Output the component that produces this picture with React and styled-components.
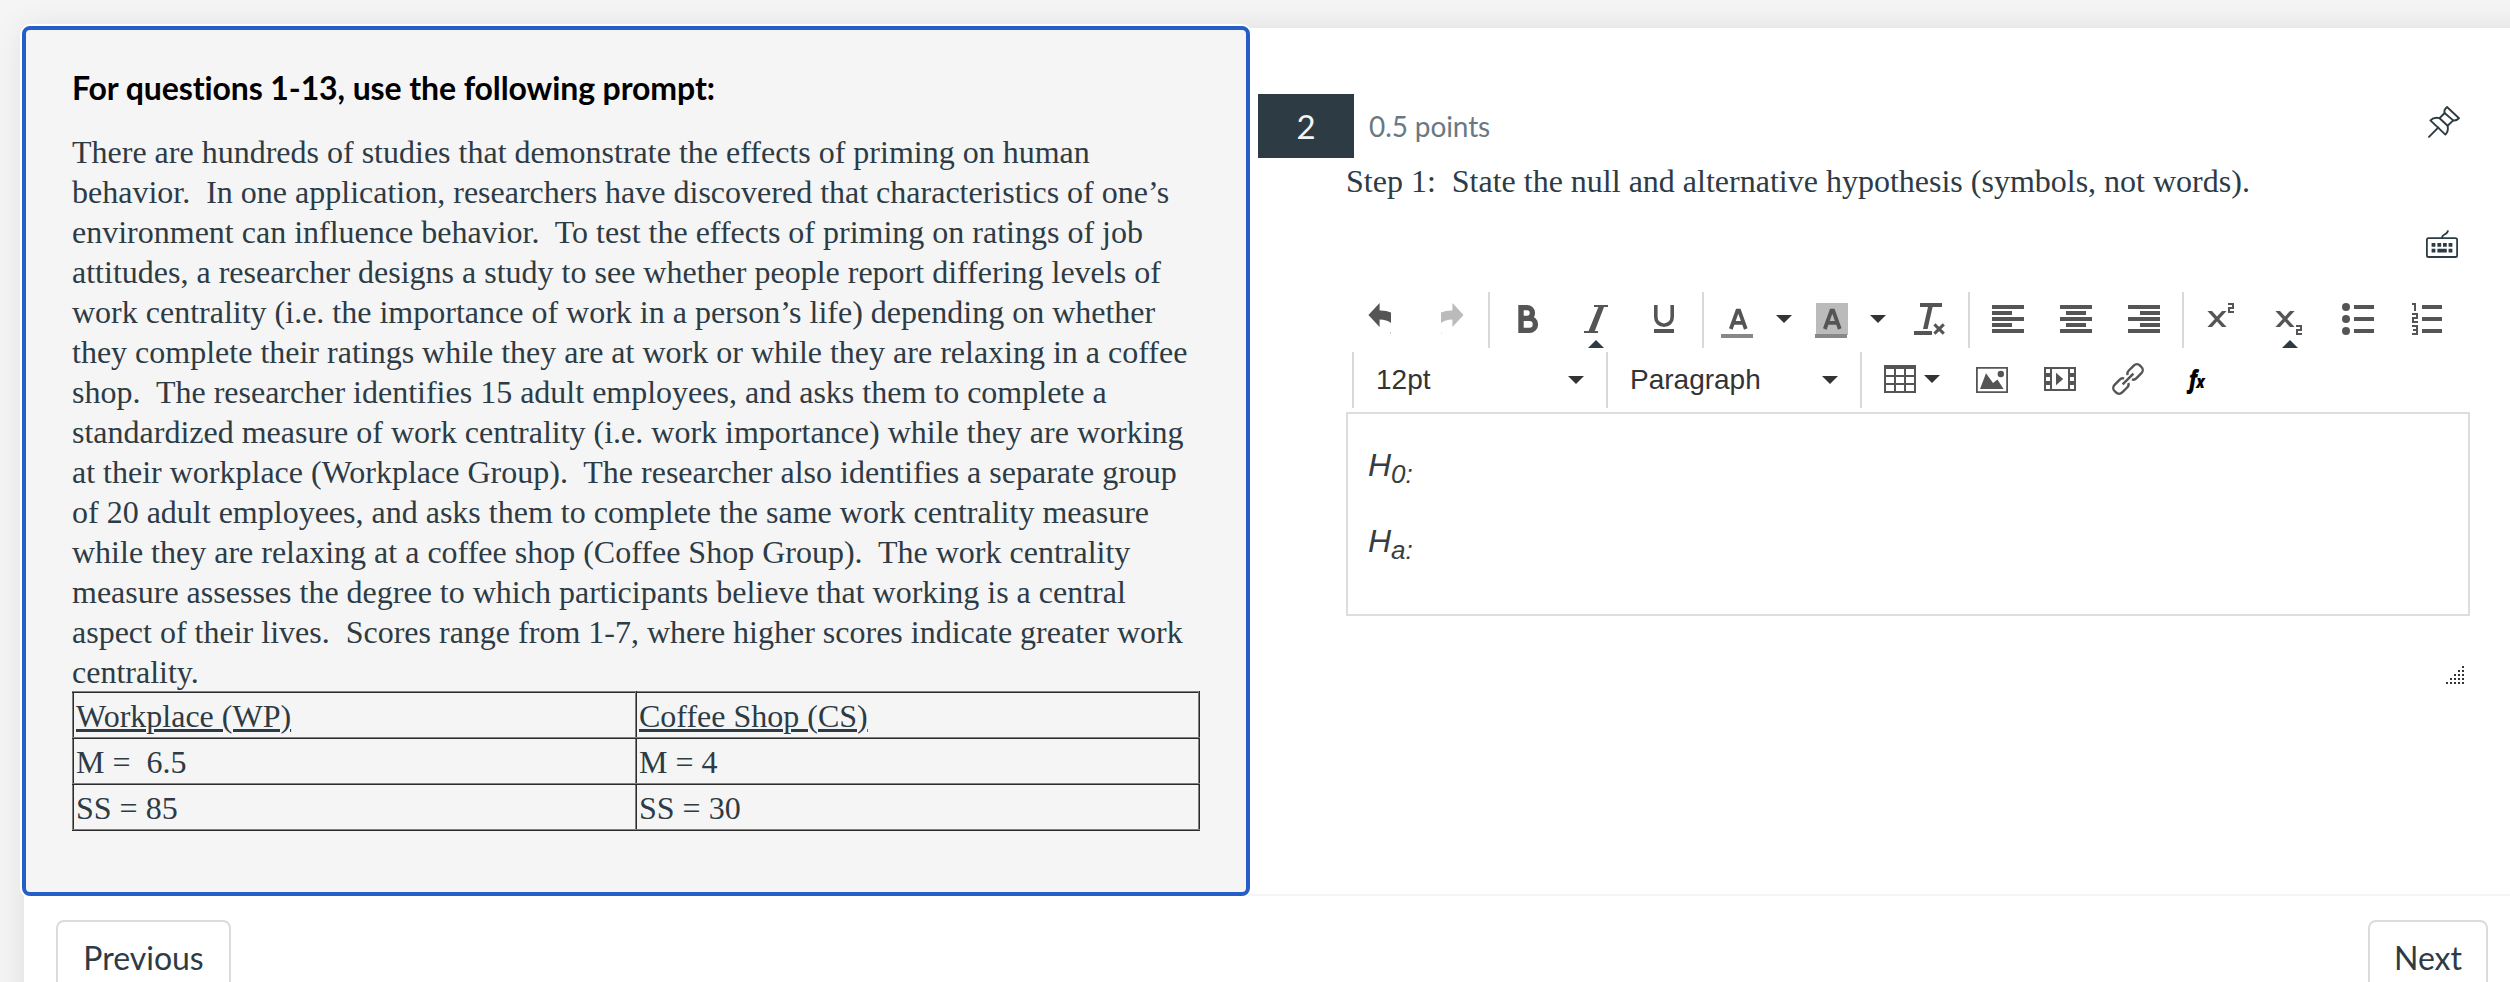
import styled, { createGlobalStyle } from "styled-components"

const GlobalStyle = createGlobalStyle`
  * {
    box-sizing: border-box;
  }
  body {
    margin: 0;
    background: #f5f5f5;
    overflow: hidden;
  }
`

const promptLines = [
  "There are hundreds of studies that demonstrate the effects of priming on human",
  "behavior.\u00a0 In one application, researchers have discovered that characteristics of one’s",
  "environment can influence behavior.\u00a0 To test the effects of priming on ratings of job",
  "attitudes, a researcher designs a study to see whether people report differing levels of",
  "work centrality (i.e. the importance of work in a person’s life) depending on whether",
  "they complete their ratings while they are at work or while they are relaxing in a coffee",
  "shop.\u00a0 The researcher identifies 15 adult employees, and asks them to complete a",
  "standardized measure of work centrality (i.e. work importance) while they are working",
  "at their workplace (Workplace Group).\u00a0 The researcher also identifies a separate group",
  "of 20 adult employees, and asks them to complete the same work centrality measure",
  "while they are relaxing at a coffee shop (Coffee Shop Group).\u00a0 The work centrality",
  "measure assesses the degree to which participants believe that working is a central",
  "aspect of their lives.\u00a0 Scores range from 1-7, where higher scores indicate greater work",
  "centrality.",
]

const Icon = ({ children, color = "#555" }) => (
  <IconSvg viewBox="0 0 16 16" color={color}>
    {children}
  </IconSvg>
)

const Caret = () => (
  <CaretSvg viewBox="0 0 16 8">
    <path d="M0 0h16L8 8z" />
  </CaretSvg>
)

const letterA = (
  <path d="M4.4 13 7.7 3.8h.9L11.9 13M5.4 9.9h5.4" fill="none" stroke="currentColor" strokeWidth="1.9" />
)

const UndoIcon = ({ color }) => (
  <Icon color={color}>
    <path d="M1.2 6 6.8 0v3.8q3.2-.1 5.7.9V10Q10.5 8.2 6.8 8.2V12z" />
    <path d="M12.2 14.5h.3v1h-.3z" opacity=".5" />
  </Icon>
)

const BoldIcon = () => (
  <Icon>
    <path
      d="M4.5 2.3h3a2.7 2.7 0 0 1 0 5.4h-3M4.5 7.7h4.2a3 3 0 0 1 0 6H4.5zM4.5 1v14"
      fill="none"
      stroke="currentColor"
      strokeWidth="2.7"
    />
  </Icon>
)

const ItalicIcon = () => (
  <Icon>
    <path d="M7 1h7v1h-2L7.4 14H9v1H2v-1h2.3L9.2 2H7z" />
  </Icon>
)

const UnderlineIcon = () => (
  <Icon>
    <path d="M3.9 1v6.1a4.1 4 0 0 0 8.2 0V1" fill="none" stroke="currentColor" strokeWidth="1.8" />
    <path d="M3 13h10v2H3z" />
  </Icon>
)

const TextColorIcon = () => (
  <Icon>
    {letterA}
    <path d="M-.5 15.5h16v2h-16z" fill="#888" />
  </Icon>
)

const BackColorIcon = () => (
  <Icon>
    <path d="M0 0h16v16H0z" fill="#bbb" />
    {letterA}
    <path d="M-.5 15.5h16v2h-16z" fill="#888" />
  </Icon>
)

const ClearIcon = () => (
  <Icon>
    <path d="M3 0h11v2H9.3L6.8 13H4.5L7 2H3zM0 14h9v2H0z" />
    <path d="m10.2 10.7 4.7 4.6m0-4.6-4.7 4.6" fill="none" stroke="currentColor" strokeWidth="1.5" />
  </Icon>
)

const AlignLeftIcon = () => (
  <Icon>
    <path d="M0 1h16v2H0zM0 4h10v2H0zM0 7h16v2H0zM0 10h10v2H0zM0 13h16v2H0z" />
  </Icon>
)

const AlignCenterIcon = () => (
  <Icon>
    <path d="M0 1h16v2H0zM3 4h10v2H3zM0 7h16v2H0zM3 10h10v2H3zM0 13h16v2H0z" />
  </Icon>
)

const AlignRightIcon = () => (
  <Icon>
    <path d="M0 1h16v2H0zM6 4h10v2H6zM0 7h16v2H0zM6 10h10v2H6zM0 13h16v2H0z" />
  </Icon>
)

const cross = <path d="M.7 4H3l2.500 2.700L8 4h2.300L6.600 8l3.700 4H8L5.500 9.300 3 12H.7l3.700-4z" />

const SuperIcon = () => (
  <Icon>
    {cross}
    <path d="M11 .5h2.5v2h-2v2H14" fill="none" stroke="currentColor" />
  </Icon>
)

const SubIcon = () => (
  <Icon>
    {cross}
    <path d="M11 11.5h2.5v2h-2v2H14" fill="none" stroke="currentColor" />
  </Icon>
)

const BulletsIcon = () => (
  <Icon>
    <circle cx="2" cy="2" r="2" />
    <circle cx="2" cy="8" r="2" />
    <circle cx="2" cy="14" r="2" />
    <path d="M6 1h10v2H6zM6 7h10v2H6zM6 13h10v2H6z" />
  </Icon>
)

const NumbersIcon = () => (
  <Icon>
    <path d="M6 1h10v2H6zM6 7h10v2H6zM6 13h10v2H6z" />
    <path d="M1 .5h1.5V4M1 5.5h2.5v2h-2v2H4M1 11.5h2.5v4H1M1.5 13.5h2" fill="none" stroke="currentColor" />
  </Icon>
)

const TableIcon = () => (
  <Icon>
    <path
      fillRule="evenodd"
      d="M0 1h16v14H0zM1 3v3h4V3zM6 3v3h4V3zM11 3v3h4V3zM1 7v3h4V7zM6 7v3h4V7zM11 7v3h4V7zM1 11v3h4v-3zM6 11v3h4v-3zM11 11v3h4v-3z"
    />
  </Icon>
)

const ImageIcon = () => (
  <Icon>
    <path fillRule="evenodd" d="M0 2h16v13H0zM.9 2.9v11.2h14.2V2.9z" />
    <circle cx="12.4" cy="5.5" r="1.6" />
    <path d="M2 13 5 5.1 8.5 10l2.2-1.7L13.8 13z" />
  </Icon>
)

const MediaIcon = () => (
  <Icon>
    <path
      fillRule="evenodd"
      d="M0 2h16v12H0zM4 3v10h8V3zM1 3v2h2V3zM1 7v2h2V7zM1 11v2h2v-2zM13 3v2h2V3zM13 7v2h2V7zM13 11v2h2v-2z"
    />
    <path d="M6 4.9v6.2L9.6 8z" />
  </Icon>
)

const LinkIcon = () => (
  <Icon>
    <g transform="rotate(-45 8 8)" fill="none" stroke="currentColor" strokeWidth="1.2">
      <path d="M9.3 6.5q.4-1.2 2-1.2h3.5a2.2 2.2 0 0 1 2.2 2.2v1a2.2 2.2 0 0 1-2.2 2.2h-3.5q-1.6 0-2-1.2" />
      <path d="M6.7 6.5q-.4-1.2-2-1.2H1.2A2.2 2.2 0 0 0-1 7.5v1a2.2 2.2 0 0 0 2.2 2.2h3.5q1.6 0 2-1.2" />
      <path d="M4.2 8h7.6" />
    </g>
  </Icon>
)

const PinIcon = () => (
  <Icon color="#2d3b45">
    <g fill="none" stroke="currentColor" strokeWidth=".95" strokeLinejoin="round" strokeLinecap="round">
      <path d="M.5 15.4 5.2 10.7" />
      <path d="M1.2 7.2 8.7 14.3C9.8 13.2 10.2 11.6 9.8 9.9L12.6 7.2C13.5 7.4 14.3 7.2 15.5 6.1L9.5.5C8.3 1.5 8 2.5 8.3 3.5L5.8 6.1C4 5.6 2.4 6 1.2 7.2z" />
      <path d="M5.8 6.1 9.8 9.9M8.3 3.5 12.6 7.2" />
    </g>
  </Icon>
)

const KeyboardIcon = () => (
  <Icon color="#2d3b45">
    <rect x=".45" y="5.1" width="15.1" height="9.4" rx=".8" fill="none" stroke="currentColor" strokeWidth=".9" />
    <path d="M8 5C8 2.8 10.9 3.5 11 1.2" fill="none" stroke="currentColor" strokeWidth=".9" />
    <path d="M2.8 7.5h1.9v1.9H2.8zM5.7 7.5h1.9v1.9H5.7zM8.5 7.5h1.9v1.9H8.5zM11.3 7.5h1.9v1.9h-1.9zM2.8 10.4h1.9v1.9H2.8zM5.7 10.4h4.7v1.9H5.7zM11.3 10.4h1.9v1.9h-1.9z" />
  </Icon>
)

const App = () => {
  return (
    <Page>
      <GlobalStyle />
      <Card>
        <Split>
          <Prompt>
            <h2>For questions 1-13, use the following prompt:</h2>
            <div className="lines">
              {promptLines.map((line) => (
                <Line key={line}>{line}</Line>
              ))}
            </div>
            <DataTable>
              <tbody>
                <tr>
                  <td><u>Workplace (WP)</u></td>
                  <td><u>Coffee Shop (CS)</u></td>
                </tr>
                <tr>
                  <td>M =&nbsp; 6.5</td>
                  <td>M = 4</td>
                </tr>
                <tr>
                  <td>SS = 85</td>
                  <td>SS = 30</td>
                </tr>
              </tbody>
            </DataTable>
          </Prompt>

          <Question>
            <QuestionHeader>
              <div className="number">2</div>
              <div className="points">0.5 points</div>
              <PinButton><PinIcon /></PinButton>
            </QuestionHeader>
            <QuestionBody>
              <Line as="p">
                Step 1:&nbsp; State the null and alternative hypothesis (symbols, not words).
              </Line>
              <KeyboardRow><KeyboardIcon /></KeyboardRow>

              <Toolbar>
                <Group $first>
                  <Button><UndoIcon color="#555" /></Button>
                  <Button $flip><UndoIcon color="#bbb" /></Button>
                </Group>
                <Group>
                  <Button><BoldIcon /></Button>
                  <Button $active><ItalicIcon /></Button>
                  <Button><UnderlineIcon /></Button>
                </Group>
                <Group>
                  <SplitButton><TextColorIcon /><Caret /></SplitButton>
                  <SplitButton><BackColorIcon /><Caret /></SplitButton>
                  <Button><ClearIcon /></Button>
                </Group>
                <Group>
                  <Button><AlignLeftIcon /></Button>
                  <Button><AlignCenterIcon /></Button>
                  <Button><AlignRightIcon /></Button>
                </Group>
                <Group>
                  <Button><SuperIcon /></Button>
                  <Button $active><SubIcon /></Button>
                  <Button><BulletsIcon /></Button>
                  <Button><NumbersIcon /></Button>
                </Group>
              </Toolbar>
              <Toolbar $indent>
                <Group>
                  <ListBox>12pt<Caret /></ListBox>
                </Group>
                <Group>
                  <ListBox>Paragraph<Caret /></ListBox>
                </Group>
                <Group>
                  <MenuButton><TableIcon /><Caret /></MenuButton>
                  <Button><ImageIcon /></Button>
                  <Button><MediaIcon /></Button>
                  <Button><LinkIcon /></Button>
                  <Button><Formula>f<small>x</small></Formula></Button>
                </Group>
              </Toolbar>

              <Editor>
                <p>H<sub>0:</sub></p>
                <p>H<sub>a:</sub></p>
              </Editor>
              <ResizeHandle viewBox="0 0 18 18">
                {[0, 1, 2, 3, 4].map((row) =>
                  [0, 1, 2, 3, 4]
                    .filter((col) => col + row >= 4)
                    .map((col) => (
                      <rect key={`${row}-${col}`} x={col * 4} y={row * 4} width="2" height="2" />
                    ))
                )}
              </ResizeHandle>
            </QuestionBody>
          </Question>
        </Split>

        <Footer>
          <NavButton $width="175px">Previous</NavButton>
          <NavButton $width="120px">Next</NavButton>
        </Footer>
      </Card>
    </Page>
  )
}

const Page = styled.div`
  width: 2510px;
  height: 982px;
  padding: 28px 0 0 24px;
  overflow: hidden;
  background: #f5f5f5;
  color: #2d3b45;
  font-family: Lato, sans-serif;
`

const Card = styled.div`
  width: 2560px;
  height: 1010px;
  background: #fff;
  box-shadow: 0 0 30px rgba(0, 0, 0, 0.1);
`

const Split = styled.div`
  display: flex;
  width: 2486px;
  height: 868px;
  border-bottom: 2px solid #f5f5f5;
`

const Prompt = styled.section`
  flex: none;
  width: 1228px;
  height: 870px;
  margin: -2px;
  padding: 38px 46px 0;
  border: 4px solid #265ec8;
  border-radius: 8px;
  background: #f5f5f5;
  box-shadow: 0 0 0 2px #fff;
  h2 {
    margin: 0 0 24px;
    color: #000;
    font-size: 32px;
    line-height: 40px;
    font-weight: 700;
    font-variant-ligatures: none;
    letter-spacing: -0.1px;
    white-space: nowrap;
  }
  .lines {
    height: 559px;
  }
`

const Line = styled.div`
  margin: 0;
  font-family: "Liberation Serif", serif;
  font-size: 32px;
  line-height: 40px;
  white-space: nowrap;
`

const DataTable = styled.table`
  width: 1128px;
  table-layout: fixed;
  border-collapse: collapse;
  font-family: "Liberation Serif", serif;
  font-size: 32px;
  line-height: 40px;
  td {
    padding: 3px 2px 1px;
    border: 2px ridge #808080;
  }
  u {
    text-decoration-thickness: 3px;
  }
`

const Question = styled.section`
  flex: 1;
  margin-left: 10px;
  padding-top: 66px;
`

const QuestionHeader = styled.header`
  display: flex;
  height: 64px;
  .number {
    width: 96px;
    background: #2d3b45;
    color: #f5f5f5;
    font-size: 33px;
    line-height: 65px;
    text-align: center;
  }
  .points {
    margin-left: 15px;
    color: #6a7883;
    font-size: 28px;
    line-height: 65px;
    letter-spacing: -0.1px;
  }
`

const PinButton = styled.div`
  margin: 12px 50px 0 auto;
`

const QuestionBody = styled.div`
  margin: 3px 40px 0 88px;
`

const KeyboardRow = styled.div`
  display: flex;
  justify-content: flex-end;
  height: 91px;
  padding: 27px 12px 0 0;
`

const Toolbar = styled.div`
  display: flex;
  height: 56px;
  margin-bottom: 4px;
  padding-left: ${({ $indent }) => ($indent ? "6px" : 0)};
`

const Group = styled.div`
  display: flex;
  padding: 0 4px 0 ${({ $first }) => ($first ? "2px" : "4px")};
  border-left: ${({ $first }) => ($first ? "none" : "2px solid #d9d9d9")};
`

const Button = styled.div`
  position: relative;
  display: flex;
  align-items: center;
  justify-content: center;
  width: 68px;
  padding-bottom: 2px;
  svg {
    transform: ${({ $flip }) => ($flip ? "scaleX(-1)" : "none")};
  }
  &::after {
    content: "";
    display: ${({ $active }) => ($active ? "block" : "none")};
    position: absolute;
    bottom: 0;
    left: 26px;
    border: 8px solid transparent;
    border-top: 0;
    border-bottom-color: #2d3b45;
  }
`

const SplitButton = styled.div`
  display: flex;
  align-items: center;
  gap: 22px;
  width: 94px;
  padding: 0 0 2px 14px;
`

const MenuButton = styled.div`
  display: flex;
  align-items: center;
  gap: 8px;
  padding: 0 18px 2px;
`

const ListBox = styled.div`
  display: flex;
  align-items: center;
  justify-content: space-between;
  width: 244px;
  padding: 0 18px;
  color: #333;
  font-family: "Liberation Sans", sans-serif;
  font-size: 28px;
`

const Formula = styled.span`
  color: #000;
  font-family: "Open Sans", sans-serif;
  font-size: 25px;
  line-height: 28px;
  font-style: italic;
  font-weight: 800;
  letter-spacing: -1px;
  transform: scaleX(0.82);
  small {
    font-size: 18px;
  }
`

const IconSvg = styled.svg`
  display: block;
  flex: none;
  width: 32px;
  height: 32px;
  overflow: visible;
  color: ${({ color }) => color};
  fill: currentColor;
`

const CaretSvg = styled.svg`
  flex: none;
  width: 16px;
  height: 8px;
  fill: #333;
`

const Editor = styled.div`
  height: 204px;
  padding: 33px 20px;
  border: 2px solid #ddd;
  color: #373d40;
  font-family: "Liberation Sans", sans-serif;
  font-size: 32px;
  font-style: italic;
  p {
    height: 76px;
    margin: 0;
    line-height: 36px;
  }
  sub {
    position: relative;
    bottom: -6.5px;
    font-size: 26px;
    line-height: 0;
    vertical-align: baseline;
  }
`

const ResizeHandle = styled.svg`
  display: block;
  width: 18px;
  height: 18px;
  margin: 50px 6px 0 auto;
  fill: #333;
`

const Footer = styled.footer`
  display: flex;
  justify-content: space-between;
  width: 2486px;
  padding: 24px 22px 0 32px;
`

const NavButton = styled.button`
  width: ${({ $width }) => $width};
  height: 76px;
  padding: 0 0 2px;
  border: 2px solid #d9dbdd;
  border-radius: 8px;
  background: #fff;
  color: #2d3b45;
  font-family: Lato, sans-serif;
  font-size: 32px;
`

export default App
